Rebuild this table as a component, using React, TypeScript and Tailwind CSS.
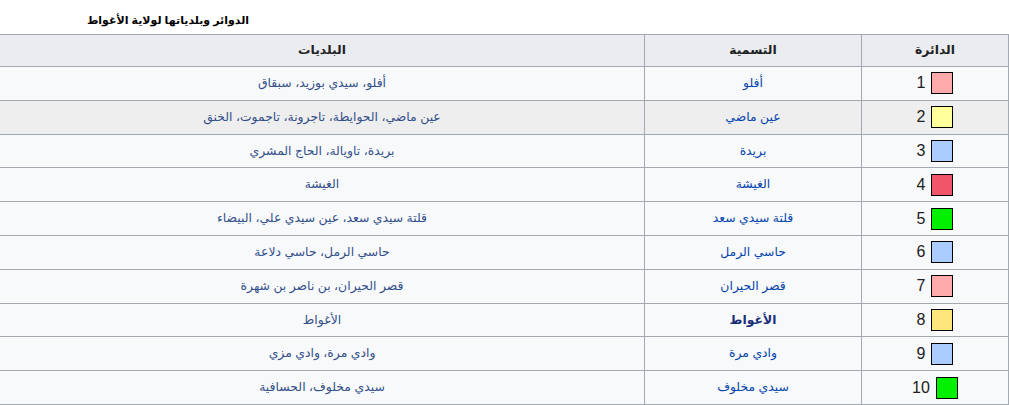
const rows = [
  { n: 1, color: "bg-[#ffaaaa]", name: "أفلو", towns: "أفلو، سيدي بوزيد، سبقاق" },
  { n: 2, color: "bg-[#ffff9c]", name: "عين ماضي", towns: "عين ماضي، الحوايطة، تاجرونة، تاجموت، الخنق" },
  { n: 3, color: "bg-[#aaccff]", name: "بريدة", towns: "بريدة، تاويالة، الحاج المشري" },
  { n: 4, color: "bg-[#f0556a]", name: "الغيشة", towns: "الغيشة" },
  { n: 5, color: "bg-[#00f000]", name: "قلتة سيدي سعد", towns: "قلتة سيدي سعد، عين سيدي علي، البيضاء" },
  { n: 6, color: "bg-[#aaccff]", name: "حاسي الرمل", towns: "حاسي الرمل، حاسي دلاعة" },
  { n: 7, color: "bg-[#ffaaaa]", name: "قصر الحيران", towns: "قصر الحيران، بن ناصر بن شهرة" },
  { n: 8, color: "bg-[#ffe67a]", name: "الأغواط", towns: "الأغواط", self: true },
  { n: 9, color: "bg-[#aaccff]", name: "وادي مرة", towns: "وادي مرة، وادي مزي" },
  { n: 10, color: "bg-[#00f000]", name: "سيدي مخلوف", towns: "سيدي مخلوف، الحسافية" },
];

export default function App() {
  return (
    <div className="w-[1009px] h-[405px] overflow-hidden bg-white font-['Liberation_Sans','DejaVu_Sans',sans-serif] text-[#202122]">
      <div className="w-[336px] pt-[12px] h-[34px] text-center text-[11px] font-bold text-black" dir="rtl">
        الدوائر وبلدياتها لولاية الأغواط
      </div>
      <table dir="rtl" className="w-[1009px] border-collapse text-[12.4px] text-center">
        <thead>
          <tr className="bg-[#eaecf0] h-[32px]">
            <th className="w-[147px] border border-[#a2a9b1] font-bold">الدائرة</th>
            <th className="w-[217px] border border-[#a2a9b1] font-bold">التسمية</th>
            <th className="border border-[#a2a9b1] border-l-0 font-bold">البلديات</th>
          </tr>
        </thead>
        <tbody>
          {rows.map((r) => (
            <tr key={r.n} className={`h-[33.8px] ${r.n === 2 ? "bg-[#eeeeee]" : "bg-[#f8f9fa]"}`}>
              <td className="border border-[#a2a9b1] p-0">
                <div className="flex items-center justify-center gap-[6px]">
                  <span className={`w-[22px] h-[22px] border border-black ${r.color}`} />
                  <span className="text-[16px] text-[#202122]">{r.n}</span>
                </div>
              </td>
              <td className="border border-[#a2a9b1]">
                <span className={r.self ? "font-bold text-[#1a2f7a]" : "text-[#0645ad]"}>{r.name}</span>
              </td>
              <td className="border border-[#a2a9b1] border-l-0">
                <span className="text-[#33508a]">{r.towns}</span>
              </td>
            </tr>
          ))}
        </tbody>
      </table>
    </div>
  );
}
